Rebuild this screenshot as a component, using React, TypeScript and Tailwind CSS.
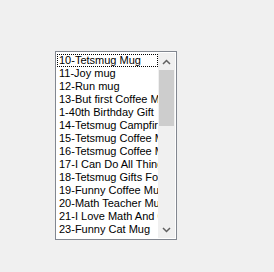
const items = [
  '10-Tetsmug Mug',
  '11-Joy mug',
  '12-Run mug',
  '13-But first Coffee Mug',
  '1-40th Birthday Gift',
  '14-Tetsmug Campfire Mug',
  '15-Tetsmug Coffee Mug',
  '16-Tetsmug Coffee Mug',
  '17-I Can Do All Things',
  '18-Tetsmug Gifts For Her',
  '19-Funny Coffee Mug',
  '20-Math Teacher Mug',
  '21-I Love Math And Coffee',
  '23-Funny Cat Mug',
];

function Chevron({ up }: { up?: boolean }) {
  return (
    <svg width="9" height="6" viewBox="0 0 9 6" className="block">
      <path
        d={up ? 'M1 5 L4.5 1.5 L8 5' : 'M1 1 L4.5 4.5 L8 1'}
        fill="none"
        stroke="#606060"
        strokeWidth="1.5"
      />
    </svg>
  );
}

export default function App() {
  return (
    <div className="h-[272px] w-[274px] bg-[#f0f0f0] pl-[55px] pt-[51px]">
      <div className="flex h-[189px] w-[122px] border border-[#828790] bg-white p-px font-['Liberation_Sans',Arial,sans-serif] text-[11px] text-black">
        <ul className="min-w-0 flex-1 overflow-hidden whitespace-nowrap pt-px">
          {items.map((item, i) => (
            <li
              key={item}
              className={
                i === 0
                  ? 'h-[13px] overflow-hidden border border-dotted border-black pl-px leading-[11px]'
                  : 'h-[13px] overflow-hidden pl-[2px] leading-[13px]'
              }
            >
              {item}
            </li>
          ))}
        </ul>
        <div className="flex w-[17px] shrink-0 flex-col bg-[#f0f0f0]">
          <div className="flex h-[17px] items-center justify-center">
            <Chevron up />
          </div>
          <div className="flex-1 px-px">
            <div className="h-[56px] bg-[#cdcdcd]" />
          </div>
          <div className="flex h-[17px] items-center justify-center">
            <Chevron />
          </div>
        </div>
      </div>
    </div>
  );
}
